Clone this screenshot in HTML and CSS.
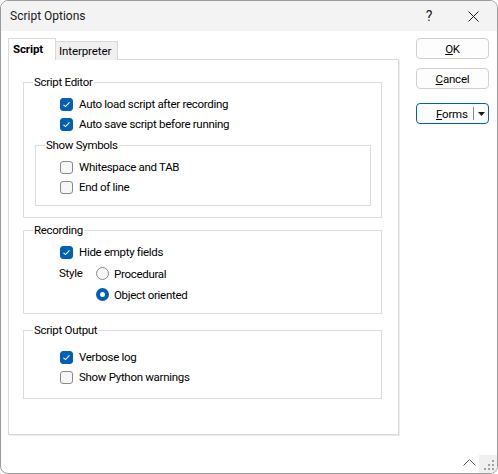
FILE: index.html
```html
<!DOCTYPE html>
<html lang="en">
<head>
    <meta charset="UTF-8">
    <title>Script Options</title>
    <link rel="stylesheet" href="styles.css">
</head>
<body>
    <div class="window">
        <div class="titlebar">
            <span class="title">Script Options</span>
            <span class="help">?</span>
            <span class="close">
                <svg width="11" height="11" viewBox="0 0 11 11"><path d="M0.5 0.5 L10.5 10.5 M10.5 0.5 L0.5 10.5" stroke="#1a1a1a" stroke-width="1" fill="none"/></svg>
            </span>
        </div>

        <div class="content">
            <div class="left">
                <ul class="tabs">
                    <li class="active">Script</li>
                    <li>Interpreter</li>
                </ul>

                <div class="pane">
                    <fieldset class="group editor">
                        <legend>Script Editor</legend>
                        <div class="row"><span class="check on"></span>Auto load script after recording</div>
                        <div class="row"><span class="check on"></span>Auto save script before running</div>

                        <fieldset class="group sub">
                            <legend>Show Symbols</legend>
                            <div class="row"><span class="check"></span>Whitespace and TAB</div>
                            <div class="row"><span class="check"></span>End of line</div>
                        </fieldset>
                    </fieldset>

                    <fieldset class="group recording">
                        <legend>Recording</legend>
                        <div class="row"><span class="check on"></span>Hide empty fields</div>
                        <div class="style-row">
                            <span class="style-label">Style</span>
                            <div class="radios">
                                <div class="row radio-row"><span class="radio"></span>Procedural</div>
                                <div class="row radio-row"><span class="radio on"></span>Object oriented</div>
                            </div>
                        </div>
                    </fieldset>

                    <fieldset class="group output">
                        <legend>Script Output</legend>
                        <div class="row"><span class="check on"></span>Verbose log</div>
                        <div class="row"><span class="check"></span>Show Python warnings</div>
                    </fieldset>
                </div>
            </div>

            <div class="buttons">
                <button class="btn"><u>O</u>K</button>
                <button class="btn"><u>C</u>ancel</button>
                <button class="btn forms">
                    <span class="forms-label"><u>F</u>orms</span>
                    <span class="split"></span>
                    <svg class="arrow" width="7" height="4" viewBox="0 0 7 4"><path d="M0 0 H7 L3.5 4 Z" fill="#1a1a1a"/></svg>
                </button>
            </div>
        </div>

        <div class="footer">
            <svg class="chevron" width="13" height="7" viewBox="0 0 13 7"><path d="M0.5 6.5 L6.5 0.5 L12.5 6.5" stroke="#555" stroke-width="1" fill="none"/></svg>
            <div class="grip">
                <svg width="18" height="18" viewBox="0 0 18 18">
                    <rect x="13" y="5" width="2" height="2" fill="#a0a0a0"/>
                    <rect x="9" y="9" width="2" height="2" fill="#a0a0a0"/>
                    <rect x="13" y="9" width="2" height="2" fill="#a0a0a0"/>
                    <rect x="5" y="13" width="2" height="2" fill="#a0a0a0"/>
                    <rect x="9" y="13" width="2" height="2" fill="#a0a0a0"/>
                    <rect x="13" y="13" width="2" height="2" fill="#a0a0a0"/>
                </svg>
            </div>
        </div>
    </div>
</body>
</html>
```

FILE: styles.css
```css
* {
    box-sizing: border-box;
}

html, body {
    margin: 0;
    padding: 0;
    background: #fff;
}

body {
    font-family: Roboto, sans-serif;
    font-size: 11.5px;
    letter-spacing: -0.3px;
    color: #000;
}

.window {
    width: 498px;
    height: 474px;
    border: 1px solid #9a9a9a;
    border-radius: 8px;
    overflow: hidden;
    display: flex;
    flex-direction: column;
    background: #fff;
}

/* title bar */
.titlebar {
    height: 30px;
    background: #f3f3f3;
    display: flex;
    align-items: center;
    flex-shrink: 0;
    font-size: 12px;
    letter-spacing: 0;
    color: #1a1a1a;
}

.title {
    margin-left: 9px;
    flex: 1;
}

.help {
    font-size: 14px;
    width: 12px;
    text-align: center;
    margin-right: 33px;
}

.close {
    display: flex;
    margin-right: 18px;
}

/* main area */
.content {
    flex: 1;
    display: flex;
    padding: 7px 8px 0 7px;
}

.left {
    width: 392px;
}

.tabs {
    list-style-type: none;
    margin: 0;
    padding: 0;
    display: flex;
    align-items: flex-end;
    height: 22px;
    margin-bottom: -1px;
    position: relative;
    z-index: 1;
    font-size: 11.5px;
    letter-spacing: -0.1px;
}

.tabs li {
    height: 19px;
    width: 62px;
    line-height: 18px;
    padding-left: 3px;
    background: #f0f0f0;
    border: 1px solid #d9d9d9;
    border-left: none;
    border-bottom: none;
}

.tabs li.active {
    height: 22px;
    width: 48px;
    line-height: 21px;
    padding-left: 4px;
    background: #fff;
    border-left: 1px solid #d9d9d9;
    font-weight: bold;
}

.pane {
    width: 391px;
    height: 376px;
    border: 1px solid #d9d9d9;
    box-shadow: 1px 1px 0 #ececec;
    padding-top: 14px;
}

/* group boxes */
.group {
    margin: 0 16px 0 14px;
    border: 1px solid #dcdcdc;
    padding: 4px 10px 11px 9px;
    min-inline-size: 0;
}

.group legend {
    padding: 0 1px;
    line-height: 16px;
}

.group .row {
    margin-left: 27px;
}

.group.sub {
    margin: 3px 0 0 2px;
    padding: 4px 0 8px 9px;
}

.group.sub .row {
    margin-left: 15px;
}

.recording {
    margin-top: 4px;
    padding-bottom: 8px;
}

.output {
    margin-top: 8px;
    padding-top: 9px;
}

.row {
    display: flex;
    align-items: center;
    height: 20px;
    gap: 6px;
}

.check {
    width: 13px;
    height: 13px;
    border: 1px solid #8a8a8a;
    border-radius: 3px;
    background: #f6f6f6;
    flex-shrink: 0;
}

.check.on {
    border-color: #005fb8;
    background: #005fb8 url("data:image/svg+xml,%3Csvg xmlns='http://www.w3.org/2000/svg' width='11' height='11' viewBox='0 0 11 11'%3E%3Cpath d='M2.5 5.8 L4.5 7.6 L8.5 3.4' stroke='white' stroke-width='1.1' fill='none'/%3E%3C/svg%3E") center no-repeat;
}

.style-row {
    display: flex;
    margin-top: 1px;
    margin-left: 26px;
}

.style-label {
    width: 37px;
    line-height: 21px;
}

.group .radio-row {
    margin-left: 0;
    height: 21px;
    gap: 5px;
}

.radio {
    width: 13px;
    height: 13px;
    border: 1px solid #8a8a8a;
    border-radius: 50%;
    background: #f6f6f6;
    flex-shrink: 0;
}

.radio.on {
    border: 4px solid #005fb8;
    background: #fff;
}

/* buttons */
.buttons {
    margin-left: 16px;
    padding-top: 0;
    display: flex;
    flex-direction: column;
    width: 73px;
}

.btn {
    font-family: inherit;
    font-size: 11.5px;
    letter-spacing: -0.2px;
    color: #000;
    width: 73px;
    height: 21px;
    border: 1px solid #d0d0d0;
    border-radius: 4px;
    background: #fdfdfd;
    padding: 0;
    margin-bottom: 9px;
}

.btn.forms {
    margin-top: 5px;
    border-color: #005fb8;
    display: flex;
    align-items: center;
    padding: 0;
}

.forms-label {
    margin-left: 19px;
}

.split {
    width: 1px;
    height: 13px;
    background: #8a8a8a;
    margin-left: 5px;
}

.arrow {
    margin-left: 4px;
}

/* bottom strip */
.footer {
    height: 18px;
    display: flex;
    justify-content: flex-end;
    align-items: center;
    flex-shrink: 0;
}

.chevron {
    margin-right: 3px;
    margin-top: -4px;
}

.grip {
    width: 18px;
    height: 18px;
    background: #f0f0f0;
    display: flex;
}
```
